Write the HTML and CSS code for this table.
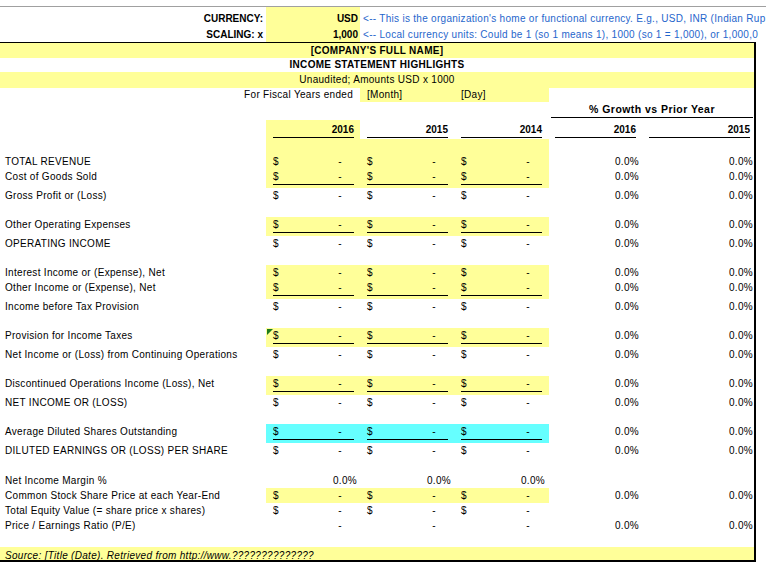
FILE: index.html
```html
<!DOCTYPE html>
<html>
<head>
<meta charset="utf-8">
<title>Income Statement Highlights</title>
<link rel="stylesheet" href="styles.css">
</head>
<body>
<div class="topline"></div>
<div class="top t1">
  <div class="tl">CURRENCY:</div>
  <div class="tv">USD</div>
  <div class="tn">&lt;-- This is the organization's home or functional currency. E.g., USD, INR (Indian Rup</div>
</div>
<div class="top t2">
  <div class="tl">SCALING: x</div>
  <div class="tv">1,000</div>
  <div class="tn">&lt;-- Local currency units: Could be 1 (so 1 means 1), 1000 (so 1 = 1,000), or 1,000,0</div>
</div>

<div class="sheet">
  <div class="full y b r-co">[COMPANY'S FULL NAME]</div>
  <div class="full b r-is">INCOME STATEMENT HIGHLIGHTS</div>
  <div class="full y r-un">Unaudited; Amounts USD x 1000</div>

  <div class="row r-fy">
    <div class="fyl">For Fiscal Years ended</div>
    <div class="fyc y">[Month]</div>
    <div class="fyc y">[Day]</div>
  </div>

  <div class="row r-gh">
    <div class="gh"><div class="ghi">% Growth vs Prior Year</div></div>
  </div>

  <div class="row r-yr">
    <div></div>
    <div class="c y"><div class="yr">2016</div></div>
    <div class="c"><div class="yr">2015</div></div>
    <div class="c c3"><div class="yr">2014</div></div>
    <div class="gy1"><div class="yr">2016</div></div>
    <div class="gy2"><div class="yr">2015</div></div>
  </div>

  <div class="row h15"><div></div><div class="y"></div><div class="y"></div><div class="y"></div></div>

  <div class="row h15">
    <div class="lbl">TOTAL REVENUE</div>
    <div class="c y"><div class="v"><span>$</span><span class="d">-</span></div></div>
    <div class="c y"><div class="v"><span>$</span><span class="d">-</span></div></div>
    <div class="c c3 y"><div class="v"><span>$</span><span class="d">-</span></div></div>
    <div class="g1">0.0%</div><div class="g2">0.0%</div>
  </div>
  <div class="row h19 u">
    <div class="lbl">Cost of Goods Sold</div>
    <div class="c y"><div class="v"><span>$</span><span class="d">-</span></div></div>
    <div class="c y"><div class="v"><span>$</span><span class="d">-</span></div></div>
    <div class="c c3 y"><div class="v"><span>$</span><span class="d">-</span></div></div>
    <div class="g1">0.0%</div><div class="g2">0.0%</div>
  </div>
  <div class="row h15">
    <div class="lbl">Gross Profit or (Loss)</div>
    <div class="c"><div class="v"><span>$</span><span class="d">-</span></div></div>
    <div class="c"><div class="v"><span>$</span><span class="d">-</span></div></div>
    <div class="c c3"><div class="v"><span>$</span><span class="d">-</span></div></div>
    <div class="g1">0.0%</div><div class="g2">0.0%</div>
  </div>
  <div class="row h14"></div>

  <div class="row h19 u">
    <div class="lbl">Other Operating Expenses</div>
    <div class="c y"><div class="v"><span>$</span><span class="d">-</span></div></div>
    <div class="c y"><div class="v"><span>$</span><span class="d">-</span></div></div>
    <div class="c c3 y"><div class="v"><span>$</span><span class="d">-</span></div></div>
    <div class="g1">0.0%</div><div class="g2">0.0%</div>
  </div>
  <div class="row h15">
    <div class="lbl">OPERATING INCOME</div>
    <div class="c"><div class="v"><span>$</span><span class="d">-</span></div></div>
    <div class="c"><div class="v"><span>$</span><span class="d">-</span></div></div>
    <div class="c c3"><div class="v"><span>$</span><span class="d">-</span></div></div>
    <div class="g1">0.0%</div><div class="g2">0.0%</div>
  </div>
  <div class="row h14"></div>

  <div class="row h15">
    <div class="lbl">Interest Income or (Expense), Net</div>
    <div class="c y"><div class="v"><span>$</span><span class="d">-</span></div></div>
    <div class="c y"><div class="v"><span>$</span><span class="d">-</span></div></div>
    <div class="c c3 y"><div class="v"><span>$</span><span class="d">-</span></div></div>
    <div class="g1">0.0%</div><div class="g2">0.0%</div>
  </div>
  <div class="row h19 u">
    <div class="lbl">Other Income or (Expense), Net</div>
    <div class="c y"><div class="v"><span>$</span><span class="d">-</span></div></div>
    <div class="c y"><div class="v"><span>$</span><span class="d">-</span></div></div>
    <div class="c c3 y"><div class="v"><span>$</span><span class="d">-</span></div></div>
    <div class="g1">0.0%</div><div class="g2">0.0%</div>
  </div>
  <div class="row h15">
    <div class="lbl">Income before Tax Provision</div>
    <div class="c"><div class="v"><span>$</span><span class="d">-</span></div></div>
    <div class="c"><div class="v"><span>$</span><span class="d">-</span></div></div>
    <div class="c c3"><div class="v"><span>$</span><span class="d">-</span></div></div>
    <div class="g1">0.0%</div><div class="g2">0.0%</div>
  </div>
  <div class="row h14"></div>

  <div class="row h19 u">
    <div class="lbl">Provision for Income Taxes</div>
    <div class="c y flag"><div class="v"><span>$</span><span class="d">-</span></div></div>
    <div class="c y"><div class="v"><span>$</span><span class="d">-</span></div></div>
    <div class="c c3 y"><div class="v"><span>$</span><span class="d">-</span></div></div>
    <div class="g1">0.0%</div><div class="g2">0.0%</div>
  </div>
  <div class="row h15">
    <div class="lbl">Net Income or (Loss) from Continuing Operations</div>
    <div class="c"><div class="v"><span>$</span><span class="d">-</span></div></div>
    <div class="c"><div class="v"><span>$</span><span class="d">-</span></div></div>
    <div class="c c3"><div class="v"><span>$</span><span class="d">-</span></div></div>
    <div class="g1">0.0%</div><div class="g2">0.0%</div>
  </div>
  <div class="row h14"></div>

  <div class="row h19 u">
    <div class="lbl">Discontinued Operations Income (Loss), Net</div>
    <div class="c y"><div class="v"><span>$</span><span class="d">-</span></div></div>
    <div class="c y"><div class="v"><span>$</span><span class="d">-</span></div></div>
    <div class="c c3 y"><div class="v"><span>$</span><span class="d">-</span></div></div>
    <div class="g1">0.0%</div><div class="g2">0.0%</div>
  </div>
  <div class="row h15">
    <div class="lbl">NET INCOME OR (LOSS)</div>
    <div class="c"><div class="v"><span>$</span><span class="d">-</span></div></div>
    <div class="c"><div class="v"><span>$</span><span class="d">-</span></div></div>
    <div class="c c3"><div class="v"><span>$</span><span class="d">-</span></div></div>
    <div class="g1">0.0%</div><div class="g2">0.0%</div>
  </div>
  <div class="row h14"></div>

  <div class="row h19 u">
    <div class="lbl">Average Diluted Shares Outstanding</div>
    <div class="c cy"><div class="v"><span>$</span><span class="d">-</span></div></div>
    <div class="c cy"><div class="v"><span>$</span><span class="d">-</span></div></div>
    <div class="c c3 cy"><div class="v"><span>$</span><span class="d">-</span></div></div>
    <div class="g1">0.0%</div><div class="g2">0.0%</div>
  </div>
  <div class="row h15">
    <div class="lbl">DILUTED EARNINGS OR (LOSS) PER SHARE</div>
    <div class="c"><div class="v"><span>$</span><span class="d">-</span></div></div>
    <div class="c"><div class="v"><span>$</span><span class="d">-</span></div></div>
    <div class="c c3"><div class="v"><span>$</span><span class="d">-</span></div></div>
    <div class="g1">0.0%</div><div class="g2">0.0%</div>
  </div>
  <div class="row h15"></div>

  <div class="row h15">
    <div class="lbl">Net Income Margin %</div>
    <div class="p">0.0%</div>
    <div class="p">0.0%</div>
    <div class="p p3">0.0%</div>
    <div></div><div></div>
  </div>
  <div class="row h15">
    <div class="lbl">Common Stock Share Price at each Year-End</div>
    <div class="c y"><div class="v"><span>$</span><span class="d">-</span></div></div>
    <div class="c y"><div class="v"><span>$</span><span class="d">-</span></div></div>
    <div class="c c3 y"><div class="v"><span>$</span><span class="d">-</span></div></div>
    <div class="g1">0.0%</div><div class="g2">0.0%</div>
  </div>
  <div class="row h15">
    <div class="lbl">Total Equity Value (= share price x shares)</div>
    <div class="c"><div class="v"><span>$</span><span class="d">-</span></div></div>
    <div class="c"><div class="v"><span>$</span><span class="d">-</span></div></div>
    <div class="c c3"><div class="v"><span>$</span><span class="d">-</span></div></div>
    <div></div><div></div>
  </div>
  <div class="row h15">
    <div class="lbl">Price / Earnings Ratio (P/E)</div>
    <div class="c"><div class="v vr"><span class="d">-</span></div></div>
    <div class="c"><div class="v vr"><span class="d">-</span></div></div>
    <div class="c c3"><div class="v vr"><span class="d">-</span></div></div>
    <div class="g1">0.0%</div><div class="g2">0.0%</div>
  </div>
  <div class="row h14"></div>

  <div class="src y">Source: [Title (Date). Retrieved from http://www.??????????????</div>
</div>
</body>
</html>
```
FILE: styles.css
```css
* {
  box-sizing: border-box;
  margin: 0;
  padding: 0;
}

body {
  margin: 0;
  width: 766px;
  height: 563px;
  overflow: hidden;
  background: #ffffff;
  color: #000000;
  font-family: "Liberation Sans", Arial, sans-serif;
  font-size: 10px;
}

.topline {
  height: 7px;
  border-bottom: 1px solid #a0a0a0;
}

/* top parameter rows */
.top {
  display: flex;
  white-space: nowrap;
}

.t1 {
  height: 18px;
}

.t1 > div {
  padding-top: 5px;
  line-height: 13px;
}

.t2 {
  height: 17px;
}

.t2 > div {
  padding-top: 3px;
  line-height: 14px;
}

.tl {
  flex: 0 0 266px;
  text-align: right;
  padding-right: 3px;
  font-weight: bold;
}

.tv {
  flex: 0 0 94px;
  background: #ffff99;
  text-align: right;
  padding-right: 2px;
  font-weight: bold;
}

.tn {
  flex: 1 1 auto;
  min-width: 0;
  overflow: hidden;
  padding-left: 3px;
  color: #1f66cc;
  letter-spacing: 0.29px;
}

/* main sheet */
.sheet {
  width: 756px;
  border-top: 1px solid #000;
  border-right: 2px solid #000;
  border-bottom: 2px solid #000;
  letter-spacing: 0.3px;
}

.y {
  background: #ffff99;
}

.cy {
  background: #66ffff;
}

.b {
  font-weight: bold;
}

.full {
  text-align: center;
  white-space: nowrap;
}

.r-co {
  height: 15px;
  line-height: 15px;
}

.r-is {
  height: 14px;
  line-height: 14px;
}

.r-un {
  height: 16px;
  line-height: 16px;
}

.row {
  display: grid;
  grid-template-columns: 266px 94px 94px 95px 94px 111px;
  white-space: nowrap;
}

.r-fy {
  height: 14px;
  line-height: 14px;
}

.fyl {
  grid-column: 1 / 3;
  text-align: right;
  padding-right: 7px;
}

.fyc {
  padding-left: 7px;
}

.r-gh {
  height: 18px;
}

.gh {
  grid-column: 5 / 7;
  padding: 0 1px 0 2px;
}

.ghi {
  height: 16px;
  line-height: 15px;
  border-bottom: 1px solid #000;
  text-align: center;
  font-weight: bold;
  font-size: 10.5px;
  letter-spacing: 0.45px;
}

.r-yr {
  height: 19px;
}

.yr {
  height: 18px;
  padding-top: 3px;
  line-height: 14px;
  border-bottom: 1px solid #000;
  text-align: right;
  font-weight: bold;
  letter-spacing: 0;
}

.gy1 {
  padding: 0 7px 0 6px;
}

.gy2 {
  padding: 0 4px 0 6px;
}

.h14 {
  height: 14px;
}

.h15 {
  height: 15px;
  line-height: 15px;
}

.h19 {
  height: 19px;
  line-height: 15px;
}

.lbl {
  padding-left: 5px;
}

.c {
  position: relative;
  padding: 0 6px 0 7px;
}

.c3 {
  padding-right: 7px;
}

.v {
  display: flex;
  justify-content: space-between;
  height: 15px;
}

.vr {
  justify-content: flex-end;
}

.u .v {
  height: 16px;
  border-bottom: 1px solid #000;
}

.d {
  padding-right: 12px;
}

.g1 {
  text-align: right;
  padding-right: 4px;
}

.g2 {
  text-align: right;
  padding-right: 1px;
}

.p {
  text-align: right;
  padding-right: 3px;
}

.p3 {
  padding-right: 4px;
}

.flag::before {
  content: "";
  position: absolute;
  left: 1px;
  top: 1px;
  width: 0;
  height: 0;
  border-top: 6px solid #1e7b1e;
  border-right: 6px solid transparent;
}

.src {
  height: 13px;
  padding: 1px 0 0 5px;
  line-height: 15px;
  font-style: italic;
  white-space: nowrap;
}
```
